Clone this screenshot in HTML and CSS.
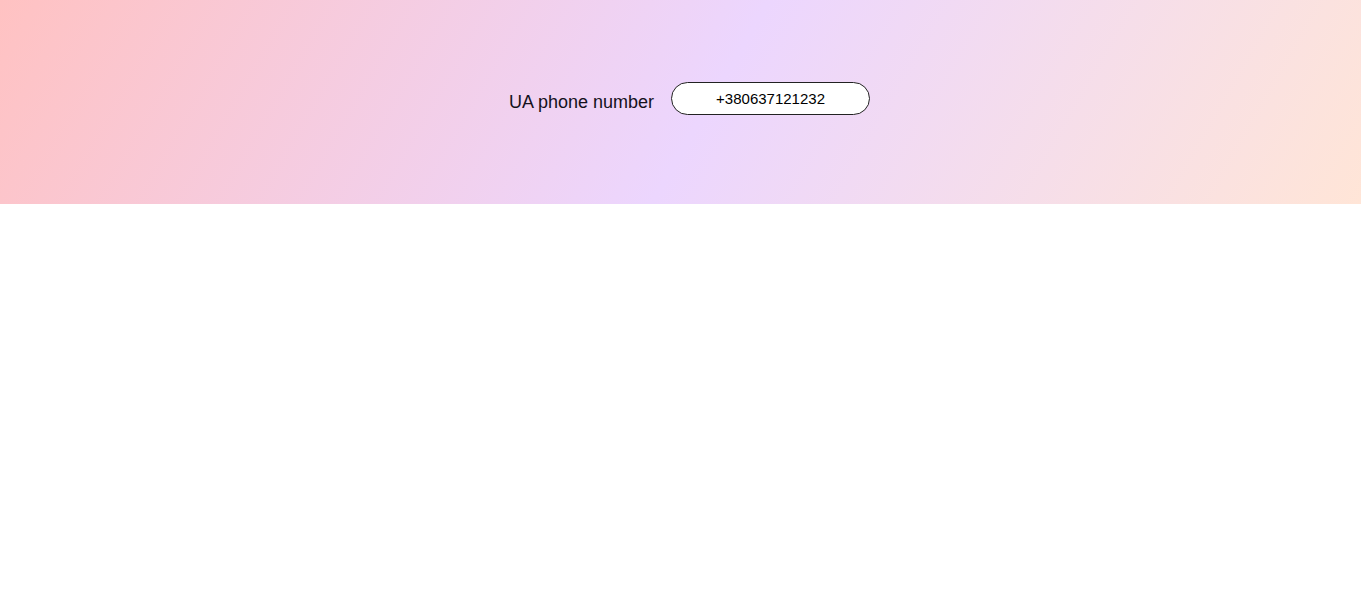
FILE: index.html
```html
<!DOCTYPE html>
<html>
<head>
<meta charset="utf-8">
<link rel="stylesheet" href="styles.css">
</head>
<body>
<header class="hero">
  <div class="field">
    <label class="field-label" for="phone">UA phone number</label>
    <input class="field-input" id="phone" type="text" value="+380637121232">
  </div>
</header>
</body>
</html>
```
FILE: styles.css
```css
html, body {
  margin: 0;
  padding: 0;
  background: #ffffff;
}
body {
  font-family: "Liberation Sans", Arial, sans-serif;
}
.hero {
  height: 204px;
  background: linear-gradient(120deg, #ffc2c2 0%, #ecd6fe 52%, #ffe5d7 100%);
  display: flex;
  justify-content: center;
  padding-left: 18px;
  box-sizing: border-box;
}
.field {
  display: flex;
  align-items: center;
  gap: 17px;
  margin-top: 82px;
  height: 33px;
}
.field-label {
  font-size: 18px;
  color: #15111c;
  position: relative;
  top: 4px;
}
.field-input {
  width: 199px;
  height: 33px;
  box-sizing: border-box;
  border: 1px solid #222;
  border-radius: 17px;
  background: #fff;
  font-family: "Liberation Sans", Arial, sans-serif;
  font-size: 15px;
  color: #000;
  text-align: center;
  padding: 0 10px;
  outline: none;
}
```
